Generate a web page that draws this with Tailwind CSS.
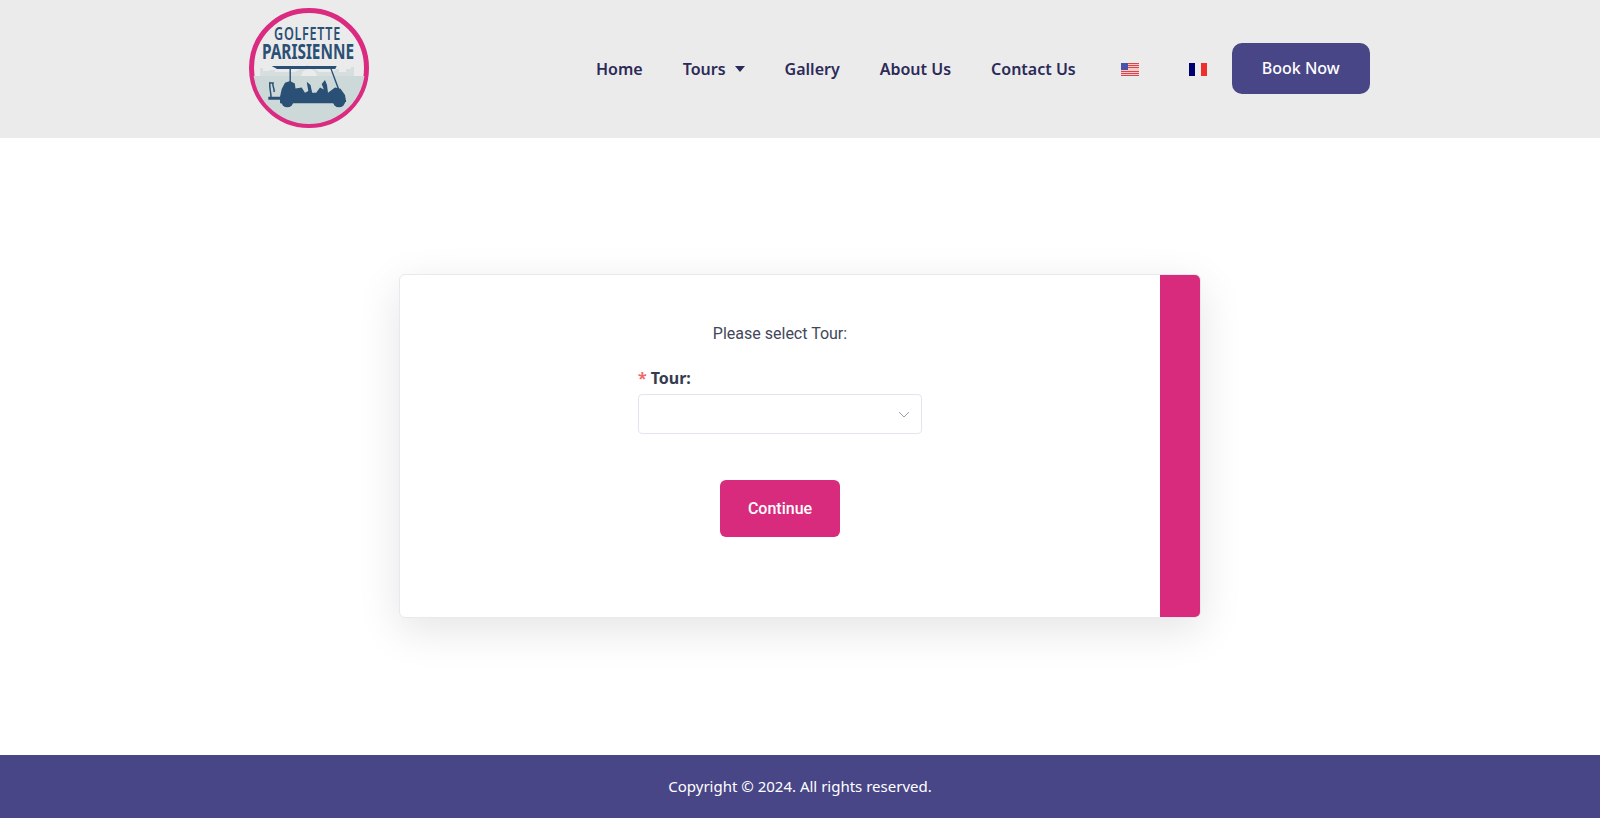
<!DOCTYPE html>
<html lang="en">
<head>
<meta charset="utf-8">
<title>Golfette Parisienne</title>
<script src="https://cdn.jsdelivr.net/npm/@tailwindcss/browser@4"></script>
</head>
<body class="bg-white font-['Noto_Sans',sans-serif]">
<div class="flex h-[818px] flex-col overflow-hidden">
  <header class="flex h-[138px] shrink-0 items-center bg-[#ebebeb] pl-[249px]">
    <svg width="120" height="120" viewBox="0 0 120 120" class="shrink-0 -translate-y-px">
      <defs><clipPath id="c"><circle cx="60" cy="60" r="56"/></clipPath></defs>
      <circle cx="60" cy="60" r="57.5" fill="#ebebeb" stroke="#da2b80" stroke-width="5"/>
      <g clip-path="url(#c)">
        <path d="M11 68V60h3v3h6v-1h6v2h20l6-4 6-3 6 3 6 4h14l3-3h3v3h7v-3h5v-2h3v9z" fill="#d6dfde"/>
        <path d="M52 68c1-5 4-7 8-7s7 2 8 7z" fill="#ebebeb"/>
        <rect x="0" y="68" width="120" height="52" fill="#cdd9d8"/>
      </g>
      <text transform="translate(58.5 32) scale(.7 1)" text-anchor="middle" font-family="Noto Sans" font-weight="600" font-size="18" letter-spacing="1" fill="#2b5075">GOLFETTE</text>
      <text transform="translate(59 51) scale(.7 1)" text-anchor="middle" font-family="Noto Sans" font-weight="700" font-size="22" fill="#2b5075">PARISIENNE</text>
      <g fill="#2b5075">
        <path d="M22.7 58h65l-1.5 3H28z"/>
        <path d="M40.5 60h1.4v15h-1.4zM81 60h1.4l9 24h-1.6z"/>
        <path d="M19.3 88.8H31L32.7 81 36 74.8 41 73 45.8 75.5 46.5 80.5 52.7 79.5 56 84.8 59.3 83 57.7 73.7 61.5 77 63.2 84.8H67.2L71 79.5 74.8 81.5 72.7 76 76 72 78 77 79 84.8 86 79.5 91.5 80.8 96 87 97.2 94 84.3 95.2H31V91.8H19.3z"/>
        <circle cx="38.3" cy="93" r="6.3"/><circle cx="90" cy="93" r="6.3"/>
      </g>
      <path d="M21 74c-1 5 1 10 1 15M21 75h3c-1 4 2 5 1 9" stroke="#2b5075" stroke-width="1.5" fill="none"/>
    </svg>
    <nav class="ml-[227px] flex items-center text-[16px] leading-6 font-semibold text-[#2b2a58]">
      <a class="mr-[40px]">Home</a>
      <a class="mr-[40px] flex items-center">Tours<svg width="10" height="6" viewBox="0 0 10 6" class="ml-[9px]"><path d="M0 0h10L5 6z" fill="#2b2a58"/></svg></a>
      <a class="mr-[40px]">Gallery</a>
      <a class="mr-[40px]">About Us</a>
      <a class="mr-[45px]">Contact Us</a>
      <svg width="18" height="13" viewBox="0 0 18 13" class="mr-[50px]">
        <rect width="18" height="13" fill="#f6c9c9"/>
        <path d="M7 .5h11M7 2.5h11M7 4.5h11M0 8.5h18M0 10.5h18M0 12.5h18" stroke="#d5464e" stroke-width="1"/>
        <rect width="7" height="7" fill="#4a51a8"/>
      </svg>
      <svg width="18" height="13" viewBox="0 0 18 13" class="mr-[25px]">
        <rect width="6" height="13" fill="#00006f"/><rect x="6" width="6" height="13" fill="#eeeeee"/><rect x="12" width="6" height="13" fill="#ee2f2c"/>
      </svg>
      <a class="flex h-[51px] w-[138px] -translate-y-px items-center justify-center rounded-[10px] bg-[#484687] font-medium text-white">Book Now</a>
    </nav>
  </header>
  <main class="flex flex-1 items-start justify-center pt-[136px]">
    <div class="flex h-[344px] w-[802px] overflow-hidden rounded-[6px] border border-[#e8e8ef] bg-white shadow-[0_12px_44px_rgba(0,0,0,0.11)]">
      <div class="flex flex-1 flex-col items-center pt-[48px] font-['Roboto',sans-serif]">
        <p class="text-[16px] leading-[22px] text-[#42475a]">Please select Tour:</p>
        <div class="mt-[21px] w-[284px]">
          <label class="flex h-[24px] items-center font-['Noto_Sans',sans-serif] text-[16px] font-bold text-[#363b4f]"><span class="mr-[4px] font-bold text-[#f06a6a]">*</span>Tour:</label>
          <div class="mt-[4px] flex h-[40px] items-center justify-end rounded-[4px] border border-[#e2e4ee] bg-white pr-[11px]">
            <svg width="12" height="7" viewBox="0 0 12 7"><path d="M1 1l5 5 5-5" fill="none" stroke="#9a9eae" stroke-width="1"/></svg>
          </div>
        </div>
        <button class="mt-[46px] h-[57px] w-[120px] rounded-[6px] bg-[#d92b7d] text-[16px] font-medium text-white">Continue</button>
      </div>
      <div class="w-[40px] bg-[#d92b7d]"></div>
    </div>
  </main>
  <footer class="flex h-[63px] shrink-0 items-center justify-center bg-[#484687] text-[15px] text-white">Copyright © 2024. All rights reserved.</footer>
</div>
</body>
</html>
